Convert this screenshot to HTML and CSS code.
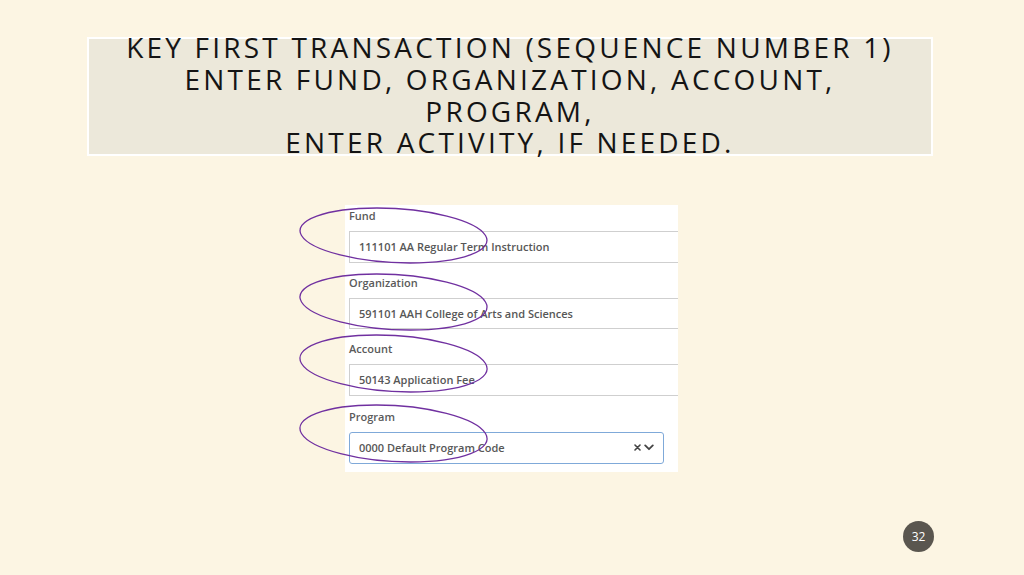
FILE: index.html
```html
<!DOCTYPE html>
<html lang="en">
<head>
<meta charset="utf-8">
<title>Key first transaction</title>
<link rel="stylesheet" href="styles.css">
</head>
<body>
<div class="slide">
  <div class="title-box">
    <h1 class="title">KEY FIRST TRANSACTION (SEQUENCE NUMBER 1)<br>ENTER FUND, ORGANIZATION, ACCOUNT,<br>PROGRAM,<br>ENTER ACTIVITY, IF NEEDED.</h1>
  </div>
  <div class="panel">
    <div class="field">
      <div class="label">Fund</div>
      <div class="input">111101 AA Regular Term Instruction</div>
    </div>
    <div class="field">
      <div class="label">Organization</div>
      <div class="input">591101 AAH College of Arts and Sciences</div>
    </div>
    <div class="field">
      <div class="label">Account</div>
      <div class="input">50143 Application Fee</div>
    </div>
    <div class="field field-last">
      <div class="label">Program</div>
      <div class="select">
        <span class="select-text">0000 Default Program Code</span>
        <span class="select-icons">
          <svg class="clear" width="7" height="7" viewBox="0 0 7 7"><path d="M1 1L6 6M6 1L1 6" stroke="#444" stroke-width="1.6" stroke-linecap="round"/></svg>
          <svg class="chev" width="10" height="7" viewBox="0 0 10 7"><path d="M1.2 1.4L5 5.2L8.8 1.4" fill="none" stroke="#444" stroke-width="1.8" stroke-linecap="round" stroke-linejoin="round"/></svg>
        </span>
      </div>
    </div>
    <svg class="circles" width="200" height="266" viewBox="0 0 200 266">
      <g fill="none" stroke="#7030a0" stroke-width="1.3">
        <ellipse rx="92" ry="27.5" transform="translate(103.5 30.5) skewX(31)" vector-effect="non-scaling-stroke"/>
        <ellipse rx="92" ry="28" transform="translate(103.5 97) skewX(31)" vector-effect="non-scaling-stroke"/>
        <ellipse rx="92" ry="28.5" transform="translate(103.5 158.5) skewX(31)" vector-effect="non-scaling-stroke"/>
        <ellipse rx="92" ry="28.5" transform="translate(103.5 228.5) skewX(31)" vector-effect="non-scaling-stroke"/>
      </g>
    </svg>
  </div>
  <div class="footer">
    <div class="page-num">32</div>
  </div>
</div>
</body>
</html>
```

FILE: styles.css
```css
html, body {
  margin: 0;
  padding: 0;
}
body {
  background: #fcf5e3;
  width: 1024px;
  height: 575px;
  overflow: hidden;
  font-family: "Open Sans", "Noto Sans", sans-serif;
}
.slide {
  display: flex;
  flex-direction: column;
  padding-top: 37px;
}
.title-box {
  margin-left: 87px;
  width: 842px;
  height: 115px;
  border: 2px solid #ffffff;
  background: #ece8da;
  display: flex;
  flex-direction: column;
  justify-content: flex-end;
}
.title {
  margin: 0 0 -5px 0;
  font-weight: 400;
  font-size: 28px;
  line-height: 31.7px;
  letter-spacing: 3.2px;
  color: #141414;
  text-align: center;
  white-space: nowrap;
}
.panel {
  position: relative;
  margin-top: 49px;
  margin-left: 345px;
  width: 329px;
  padding: 3px 0 8px 4px;
  background: #ffffff;
  display: flex;
  flex-direction: column;
  gap: 12px;
  overflow: visible;
}
.field {
  display: flex;
  flex-direction: column;
  gap: 7px;
}
.field-last {
  margin-top: 1.5px;
}
.label {
  font-size: 11px;
  line-height: 16px;
  font-weight: 600;
  color: #5a5a5a;
}
.input {
  height: 29.5px;
  border: 1px solid #cfcfcf;
  border-right: none;
  padding-left: 9px;
  font-size: 11px;
  line-height: 30px;
  font-weight: 600;
  color: #575757;
  white-space: nowrap;
}
.select {
  box-sizing: border-box;
  width: 315px;
  height: 31.5px;
  border: 1px solid #7fa9d9;
  border-radius: 3px;
  padding-left: 9px;
  display: flex;
  align-items: center;
  justify-content: space-between;
  font-size: 11px;
  font-weight: 600;
  color: #575757;
}
.select-text {
  line-height: 30px;
}
.select-icons {
  display: flex;
  align-items: center;
  gap: 3px;
  padding-right: 9px;
}
.circles {
  position: absolute;
  left: -55px;
  top: 0;
  overflow: visible;
  pointer-events: none;
}
.footer {
  display: flex;
  justify-content: flex-end;
  padding-right: 90px;
  margin-top: 49px;
}
.page-num {
  width: 31px;
  height: 31px;
  border-radius: 50%;
  background: #5a564f;
  color: #ffffff;
  font-size: 12px;
  line-height: 31px;
  text-align: center;
}
```
